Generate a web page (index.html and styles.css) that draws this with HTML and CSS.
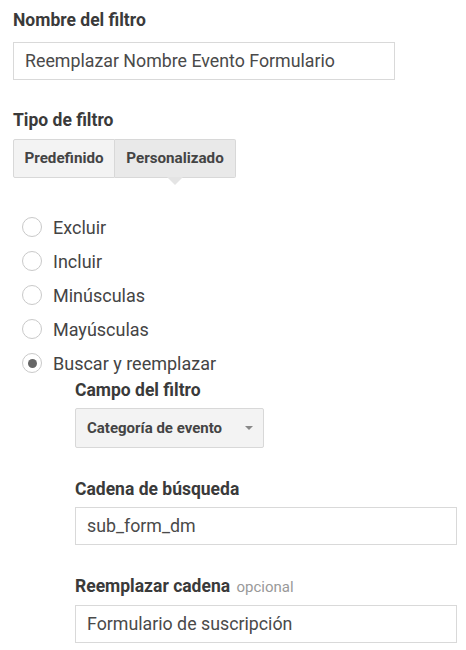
FILE: index.html
```html
<!DOCTYPE html>
<html lang="es">
<head>
<meta charset="utf-8">
<title>Filtro</title>
<link rel="stylesheet" href="styles.css">
</head>
<body>
<div class="form">
  <div class="label">Nombre del filtro</div>
  <div class="input wide">Reemplazar Nombre Evento Formulario</div>

  <div class="label type-label">Tipo de filtro</div>
  <div class="btn-group">
    <div class="btn">Predefinido</div>
    <div class="btn active">Personalizado</div>
  </div>

  <ul class="radios">
    <li class="radio-row"><span class="radio"></span><span>Excluir</span></li>
    <li class="radio-row"><span class="radio"></span><span>Incluir</span></li>
    <li class="radio-row"><span class="radio"></span><span>Minúsculas</span></li>
    <li class="radio-row"><span class="radio"></span><span>Mayúsculas</span></li>
    <li class="radio-row"><span class="radio checked"></span><span>Buscar y reemplazar</span></li>
  </ul>

  <div class="sub">
    <div class="label">Campo del filtro</div>
    <div class="select">Categoría de evento <span class="caret"></span></div>

    <div class="label sub-label">Cadena de búsqueda</div>
    <div class="input full">sub_form_dm</div>

    <div class="label sub-label">Reemplazar cadena <span class="optional">opcional</span></div>
    <div class="input full">Formulario de suscripción</div>
  </div>
</div>
</body>
</html>
```
FILE: styles.css
```css
* { box-sizing: border-box; }
html, body { margin: 0; padding: 0; background: #fff; }
body {
  font-family: Roboto, "Liberation Sans", sans-serif;
  color: #333;
}
.form {
  padding: 10px 0 0 13px;
  width: 466px;
}
.label {
  font-size: 17.5px;
  font-weight: 700;
  line-height: 20px;
  color: #3a3a3a;
}
.input {
  height: 38px;
  border: 1px solid #d9d9d9;
  margin-top: 12px;
  padding: 0 11px;
  font-size: 17.8px;
  line-height: 36px;
  color: #4a4a4a;
}
.input.wide { width: 382px; }
.input.full { width: 382px; margin-top: 8px; }
.type-label { margin-top: 30px; }
.btn-group {
  display: flex;
  margin-top: 9px;
}
.btn {
  position: relative;
  height: 39px;
  line-height: 37px;
  font-size: 15.2px;
  font-weight: 700;
  color: #444;
  width: 102px;
  text-align: center;
  background: #f3f3f3;
  border: 1px solid #d8d8d8;
  border-radius: 2px 0 0 2px;
}
.btn.active {
  width: 121px;
  background: #e9e9e9;
  border-left: none;
  border-radius: 0 2px 2px 0;
}
.btn.active::after {
  content: "";
  position: absolute;
  left: 50%;
  top: 100%;
  margin-left: -8px;
  border-left: 8px solid transparent;
  border-right: 8px solid transparent;
  border-top: 8px solid #e4e4e4;
}
.radios {
  list-style: none;
  margin: 32px 0 0;
  padding: 0 0 0 9px;
}
.radio-row {
  display: flex;
  align-items: center;
  height: 34px;
  font-size: 18px;
  color: #444;
}
.radio {
  width: 20px;
  height: 20px;
  border: 1px solid #c9c9c9;
  border-radius: 50%;
  margin-right: 11px;
  display: flex;
  align-items: center;
  justify-content: center;
  flex: none;
}
.radio.checked::after {
  content: "";
  width: 9px;
  height: 9px;
  border-radius: 50%;
  background: #666;
}
.sub {
  padding-left: 62px;
}
.select {
  display: inline-flex;
  align-items: center;
  height: 40px;
  width: 189px;
  margin-top: 8px;
  padding: 0 0 0 11px;
  background: #f3f3f3;
  border: 1px solid #d8d8d8;
  border-radius: 2px;
  font-size: 15px;
  font-weight: 700;
  color: #444;
}
.caret {
  margin-left: auto;
  margin-right: 10px;
  border-left: 4.5px solid transparent;
  border-right: 4.5px solid transparent;
  border-top: 4.5px solid #888;
}
.sub-label { margin-top: 31px; }
.optional {
  font-size: 15px;
  font-weight: 400;
  color: #999;
  margin-left: 2px;
}
```
